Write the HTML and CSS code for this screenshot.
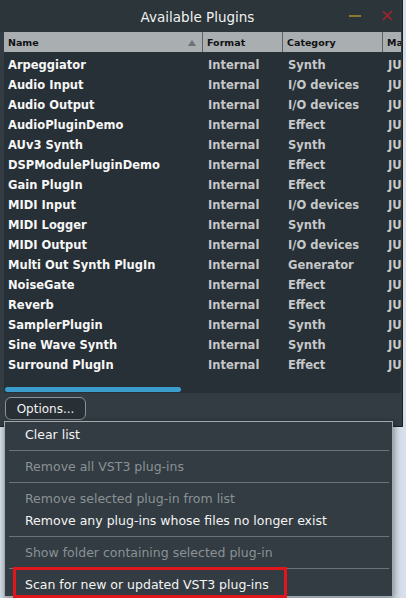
FILE: index.html
```html
<!DOCTYPE html>
<html>
<head>
<meta charset="utf-8">
<link rel="stylesheet" href="styles.css">
</head>
<body>
<div class="screen">
  <div class="window">
    <div class="titlebar">
      <span></span>
      <span class="title">Available Plugins</span>
      <span class="buttons">
        <svg class="btn-min" width="12" height="4" viewBox="0 0 12 4"><rect x="0" y="1" width="12" height="2" fill="#8c7a2c"/></svg>
        <svg class="btn-close" width="11" height="11" viewBox="0 0 11 11"><path d="M1 1 L10 10 M10 1 L1 10" stroke="#a8232a" stroke-width="1.5" fill="none"/></svg>
      </span>
    </div>
    <div class="table">
      <div class="thead">
        <div class="th name">Name<span class="sort"></span></div>
        <div class="th">Format</div>
        <div class="th">Category</div>
        <div class="th last">Manufacturer</div>
      </div>
      <div class="tbody">
        <div class="tr"><span class="c n">Arpeggiator</span><span class="c">Internal</span><span class="c">Synth</span><span class="c">JUCE</span></div>
        <div class="tr"><span class="c n">Audio Input</span><span class="c">Internal</span><span class="c">I/O devices</span><span class="c">JUCE</span></div>
        <div class="tr"><span class="c n">Audio Output</span><span class="c">Internal</span><span class="c">I/O devices</span><span class="c">JUCE</span></div>
        <div class="tr"><span class="c n">AudioPluginDemo</span><span class="c">Internal</span><span class="c">Effect</span><span class="c">JUCE</span></div>
        <div class="tr"><span class="c n">AUv3 Synth</span><span class="c">Internal</span><span class="c">Synth</span><span class="c">JUCE</span></div>
        <div class="tr"><span class="c n">DSPModulePluginDemo</span><span class="c">Internal</span><span class="c">Effect</span><span class="c">JUCE</span></div>
        <div class="tr"><span class="c n">Gain PlugIn</span><span class="c">Internal</span><span class="c">Effect</span><span class="c">JUCE</span></div>
        <div class="tr"><span class="c n">MIDI Input</span><span class="c">Internal</span><span class="c">I/O devices</span><span class="c">JUCE</span></div>
        <div class="tr"><span class="c n">MIDI Logger</span><span class="c">Internal</span><span class="c">Synth</span><span class="c">JUCE</span></div>
        <div class="tr"><span class="c n">MIDI Output</span><span class="c">Internal</span><span class="c">I/O devices</span><span class="c">JUCE</span></div>
        <div class="tr"><span class="c n">Multi Out Synth PlugIn</span><span class="c">Internal</span><span class="c">Generator</span><span class="c">JUCE</span></div>
        <div class="tr"><span class="c n">NoiseGate</span><span class="c">Internal</span><span class="c">Effect</span><span class="c">JUCE</span></div>
        <div class="tr"><span class="c n">Reverb</span><span class="c">Internal</span><span class="c">Effect</span><span class="c">JUCE</span></div>
        <div class="tr"><span class="c n">SamplerPlugin</span><span class="c">Internal</span><span class="c">Synth</span><span class="c">JUCE</span></div>
        <div class="tr"><span class="c n">Sine Wave Synth</span><span class="c">Internal</span><span class="c">Synth</span><span class="c">JUCE</span></div>
        <div class="tr"><span class="c n">Surround PlugIn</span><span class="c">Internal</span><span class="c">Effect</span><span class="c">JUCE</span></div>
      </div>
      <div class="hscroll"></div>
    </div>
    <div class="footer">
      <button class="options">Options...</button>
    </div>
  </div>

  <div class="menu">
    <div class="item">Clear list</div>
    <div class="sep"></div>
    <div class="item disabled">Remove all VST3 plug-ins</div>
    <div class="sep"></div>
    <div class="item disabled">Remove selected plug-in from list</div>
    <div class="item">Remove any plug-ins whose files no longer exist</div>
    <div class="sep"></div>
    <div class="item disabled">Show folder containing selected plug-in</div>
    <div class="sep"></div>
    <div class="item">Scan for new or updated VST3 plug-ins</div>
  </div>
  <div class="highlight"></div>
</div>
</body>
</html>
```

FILE: styles.css
```css
* { box-sizing: border-box; }
html, body { margin: 0; padding: 0; }
body {
  background: #d6dfea;
  font-family: "DejaVu Sans", Verdana, sans-serif;
}
.screen {
  position: relative;
  width: 406px;
  height: 598px;
  overflow: hidden;
  background: #d6dfea;
}
.window {
  width: 403px;
  height: 427px;
  background: #323c42;
  border-right: 1px solid #1b2125;
  border-bottom: 1px solid #1b2125;
  display: flex;
  flex-direction: column;
}
.titlebar {
  height: 32px;
  flex: none;
  background: #2c353a;
  display: grid;
  grid-template-columns: 1fr auto 1fr;
  align-items: center;
  padding-right: 9px;
}
.title {
  color: #f2f2f2;
  font-size: 13.5px;
  padding-left: 2px;
  padding-top: 1px;
}
.buttons {
  justify-self: end;
  display: flex;
  align-items: center;
  gap: 21px;
  padding-bottom: 2px;
}
.btn-min { display: block; margin-top: 1px; }
.btn-close { display: block; }

.table {
  margin: 0 1px 0 4px;
  height: 361px;
  flex: none;
  background: #273036;
  display: flex;
  flex-direction: column;
  overflow: hidden;
}
.thead {
  height: 21px;
  flex: none;
  background: #a9aeb1;
  border-bottom: 1px solid #2a3135;
  display: grid;
  grid-template-columns: 199px 80px 100px 1fr;
}
.th {
  font-weight: bold;
  font-size: 9.5px;
  color: #111;
  line-height: 21px;
  padding-left: 4px;
  border-right: 1px solid #5b6266;
  white-space: nowrap;
  overflow: hidden;
  position: relative;
}
.th.last { border-right: none; }
.sort {
  position: absolute;
  right: 6px;
  top: 8px;
  width: 0;
  height: 0;
  border-left: 4px solid transparent;
  border-right: 4px solid transparent;
  border-bottom: 6px solid #6b7175;
}
.tbody {
  padding-top: 2px;
}
.tr {
  height: 20px;
  display: grid;
  grid-template-columns: 199px 80px 100px 1fr;
  align-items: center;
}
.c {
  font-weight: bold;
  font-size: 11.5px;
  color: #c6c8c9;
  padding-left: 5px;
  white-space: nowrap;
  overflow: hidden;
}
.c.n {
  color: #f7f7f7;
  padding-left: 4px;
}
.hscroll {
  margin-top: auto;
  margin-left: 1px;
  margin-bottom: 1px;
  width: 176px;
  height: 5px;
  border-radius: 3px;
  background: #3b9dcb;
}
.footer {
  padding: 4px 0 0 5px;
}
.options {
  width: 81px;
  height: 23px;
  background: #283035;
  border: 1px solid #8b9297;
  border-radius: 6px;
  color: #f2f2f2;
  font-family: "DejaVu Sans", Verdana, sans-serif;
  font-size: 12px;
  padding: 1px 0 0 0;
  text-align: center;
  line-height: 20px;
}

.menu {
  position: absolute;
  left: 4px;
  top: 421px;
  width: 389px;
  height: 176px;
  background: #333c42;
  border: 1px solid #a3aaaf;
  box-shadow: 1px 2px 7px rgba(0, 0, 0, 0.45);
  padding-top: 2px;
}
.item {
  height: 22px;
  line-height: 22px;
  padding-left: 20px;
  font-size: 12.5px;
  color: #f4f4f4;
  white-space: nowrap;
}
.item.disabled { color: #8a9296; }
.sep {
  height: 10px;
  padding-top: 4px;
  margin: 0 3px 0 4px;
}
.sep::after {
  content: "";
  display: block;
  height: 1px;
  background: #6b7479;
}
.highlight {
  position: absolute;
  left: 13px;
  top: 567px;
  width: 274px;
  height: 31px;
  border: 3px solid #e2141c;
}
```
